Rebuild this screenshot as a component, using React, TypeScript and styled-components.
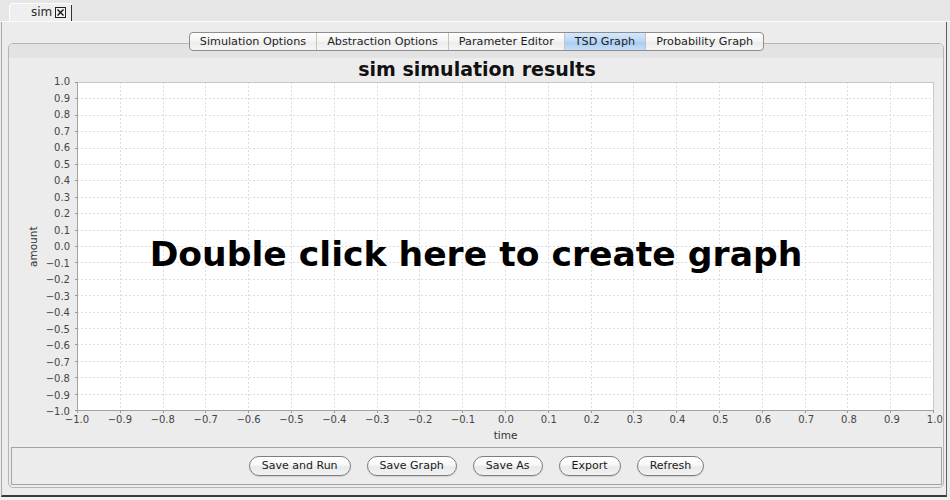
import React from "react";
import styled, { createGlobalStyle, css } from "styled-components";

const GlobalStyle = createGlobalStyle`
  html, body { margin: 0; padding: 0; background: #ececec; overflow: hidden; }
  body { font-family: "DejaVu Sans", "Liberation Sans", sans-serif; color: #000; }
  #root { width: 950px; height: 500px; }
`;

const Window = styled.div`
  width: 950px;
  height: 500px;
  display: flex;
  flex-direction: column;
  background: #ececec;
  overflow: hidden;
`;

const DocTabStrip = styled.div`
  flex: none;
  height: 21px;
  display: flex;
  align-items: flex-end;
  padding-left: 9px;
  background: #e6e6e6;
  border-bottom: 1px solid #fbfbfb;
`;

const DocTab = styled.div`
  height: 17px;
  display: flex;
  align-items: center;
  padding-left: 21px;
  background: #efefef;
  border-top: 1px solid #fdfdfd;
  border-left: 1px solid #fdfdfd;
  border-top-left-radius: 4px;
`;

const DocTabLabel = styled.span`
  font-size: 12px;
  color: #2a2a2a;
  line-height: 17px;
`;

const CloseBox = styled.span`
  width: 11px;
  height: 11px;
  box-sizing: border-box;
  border: 1px solid #222;
  margin-left: 3px;
  display: flex;
  align-items: center;
  justify-content: center;
  background: #f4f4f4;
`;

const TabCursor = styled.span`
  width: 1px;
  height: 16px;
  background: #333;
  margin-left: 5px;
`;

const Frame = styled.div`
  flex: none;
  width: 946px;
  height: 475px;
  margin-left: 1px;
  box-sizing: border-box;
  border-left: 1px solid #a9a9a9;
  border-right: 1px solid #5e5e5e;
  border-bottom: 2px solid #3a3a3a;
  padding: 10px 2px 7px 6px;
  display: flex;
  flex-direction: column;
`;

const SegGroup = styled.div`
  align-self: center;
  display: flex;
  height: 19px;
  box-sizing: border-box;
  border: 1px solid #8e8e8e;
  border-radius: 4px;
  overflow: hidden;
  background: linear-gradient(#ffffff, #f4f4f4 50%, #ebebeb 51%, #f6f6f6);
  margin-bottom: -8px;
  position: relative;
  z-index: 1;
  margin-left: 1px;
`;

const Seg = styled.div<{ $active?: boolean }>`
  padding: 0 10px;
  font-size: 11.2px;
  line-height: 17px;
  color: #1e1e1e;
  white-space: nowrap;
  border-left: 1px solid #c4c4c4;
  &:first-child {
    border-left: none;
  }
  ${(p) =>
    p.$active &&
    css`
      background: linear-gradient(#d6e8fc, #b8d6f6 50%, #a7cbf2 51%, #c6def8);
    `}
`;

const Panel = styled.div`
  flex: 1;
  border: 1px solid #b6b6b6;
  border-radius: 5px;
  background: #ececec;
  display: flex;
  flex-direction: column;
  padding-bottom: 2px;
  overflow: hidden;
`;

const TopBand = styled.div`
  height: 14px;
  background: #e3e3e3;
`;

const ChartTitle = styled.div`
  height: 22px;
  line-height: 22px;
  margin-bottom: 2px;
  text-align: center;
  font-size: 19px;
  font-weight: bold;
  color: #111;
  padding-left: 2px;
`;

const ChartBody = styled.div`
  display: grid;
  grid-template-columns: 15px 18px 29px 6px 857px 1fr;
  grid-template-rows: 329px 17px 14px;
`;

const YAxisTitle = styled.div`
  grid-column: 2;
  grid-row: 1;
  display: flex;
  align-items: center;
  justify-content: center;
  font-size: 10.5px;
  color: #333;
  writing-mode: vertical-rl;
  transform: rotate(180deg);
`;

const YLabels = styled.div`
  grid-column: 3;
  grid-row: 1;
  margin: -6px 0 -7px;
  display: flex;
  flex-direction: column;
  justify-content: space-between;
  align-items: flex-end;
  padding-right: 1px;
`;

const TickLabel = styled.span`
  font-size: 10px;
  line-height: 12px;
  height: 12px;
  color: #454545;
  white-space: nowrap;
`;

const PlotSvg = styled.svg`
  grid-column: 5;
  grid-row: 1;
  overflow: visible;
  display: block;
`;

const Overlay = styled.div`
  grid-column: 1 / -1;
  grid-row: 1;
  justify-self: center;
  align-self: center;
  margin-top: 14px;
  font-size: 34.6px;
  font-weight: bold;
  color: #000;
  white-space: nowrap;
  position: relative;
  z-index: 1;
`;

const XLabels = styled.div`
  grid-column: 5;
  grid-row: 2;
  margin: 0 -16px 0 -15px;
  padding-top: 3px;
  display: flex;
  justify-content: space-between;
  align-items: flex-start;
`;

const XTick = styled(TickLabel)`
  width: 30px;
  text-align: center;
`;

const XAxisTitle = styled.div`
  grid-column: 5;
  grid-row: 3;
  text-align: center;
  font-size: 10.5px;
  line-height: 14px;
  color: #333;
`;

const ButtonBox = styled.div`
  margin: 5px 1px 0 2px;
  height: 38px;
  box-sizing: border-box;
  border: 1px solid #a3a3a3;
  display: flex;
  justify-content: center;
  align-items: center;
  gap: 16px;
`;

const PillButton = styled.button`
  height: 20px;
  box-sizing: border-box;
  padding: 0 12px;
  border: 1px solid #7e7e7e;
  border-radius: 10px;
  background: linear-gradient(#ffffff, #f7f7f7 45%, #e9e9e9 55%, #f3f3f3);
  font-family: "DejaVu Sans", "Liberation Sans", sans-serif;
  font-size: 11px;
  line-height: 18px;
  color: #1a1a1a;
  box-shadow: 0 1px 1px rgba(0, 0, 0, 0.12);
  cursor: pointer;
`;

const StatusStrip = styled.div`
  flex: 1;
  background: #f2f2f2;
`;

const fmt = (v: number) => {
  const s = Math.abs(v).toFixed(1);
  return v < -1e-9 ? "\u2212" + s : s;
};

const ticks = Array.from({ length: 21 }, (_, i) => -1 + i * 0.1);

const PW = 856;
const PH = 328;

const Plot: React.FC = () => {
  const xs = Array.from({ length: 21 }, (_, i) => Math.round((i * PW) / 20) + 0.5);
  const ys = Array.from({ length: 21 }, (_, i) => Math.round((i * PH) / 20) + 0.5);
  return (
    <PlotSvg width={857} height={329} viewBox="0 0 857 329">
      <rect x={0} y={0} width={857} height={329} fill="#ffffff" />
      {xs.slice(1, 20).map((x) => (
        <line key={"vx" + x} x1={x} y1={0} x2={x} y2={329} stroke="#dedede" strokeWidth={1} strokeDasharray="2 2" />
      ))}
      {ys.slice(1, 20).map((y) => (
        <line key={"hy" + y} x1={0} y1={y} x2={857} y2={y} stroke="#dedede" strokeWidth={1} strokeDasharray="2 2" />
      ))}
      <line x1={0} y1={0.5} x2={857} y2={0.5} stroke="#c8c8c8" />
      <line x1={856.5} y1={0} x2={856.5} y2={329} stroke="#c8c8c8" />
      <line x1={0.5} y1={0} x2={0.5} y2={329} stroke="#a2a2a2" />
      <line x1={0} y1={328.5} x2={857} y2={328.5} stroke="#a2a2a2" />
      {ys.map((y) => (
        <line key={"ty" + y} x1={-2} y1={y} x2={0} y2={y} stroke="#9a9a9a" />
      ))}
      {xs.map((x) => (
        <line key={"tx" + x} x1={x} y1={329} x2={x} y2={331} stroke="#9a9a9a" />
      ))}
    </PlotSvg>
  );
};

const tabs = ["Simulation Options", "Abstraction Options", "Parameter Editor", "TSD Graph", "Probability Graph"];
const buttons = ["Save and Run", "Save Graph", "Save As", "Export", "Refresh"];

export default function App() {
  return (
    <>
      <GlobalStyle />
      <Window>
        <DocTabStrip>
          <DocTab>
            <DocTabLabel>sim</DocTabLabel>
            <CloseBox>
              <svg width="7" height="7" viewBox="0 0 7 7">
                <path d="M0.5 0.5 L6.5 6.5 M6.5 0.5 L0.5 6.5" stroke="#111" strokeWidth="1.4" />
              </svg>
            </CloseBox>
            <TabCursor />
          </DocTab>
        </DocTabStrip>
        <Frame>
          <SegGroup>
            {tabs.map((t) => (
              <Seg key={t} $active={t === "TSD Graph"}>
                {t}
              </Seg>
            ))}
          </SegGroup>
          <Panel>
            <TopBand />
            <ChartTitle>sim simulation results</ChartTitle>
            <ChartBody>
              <YAxisTitle>amount</YAxisTitle>
              <YLabels>
                {[...ticks].reverse().map((v) => (
                  <TickLabel key={"y" + v.toFixed(1)}>{fmt(v)}</TickLabel>
                ))}
              </YLabels>
              <Plot />
              <Overlay>Double click here to create graph</Overlay>
              <XLabels>
                {ticks.map((v) => (
                  <XTick key={"x" + v.toFixed(1)}>{fmt(v)}</XTick>
                ))}
              </XLabels>
              <XAxisTitle>time</XAxisTitle>
            </ChartBody>
            <ButtonBox>
              {buttons.map((b) => (
                <PillButton key={b}>{b}</PillButton>
              ))}
            </ButtonBox>
          </Panel>
        </Frame>
        <StatusStrip />
      </Window>
    </>
  );
}
